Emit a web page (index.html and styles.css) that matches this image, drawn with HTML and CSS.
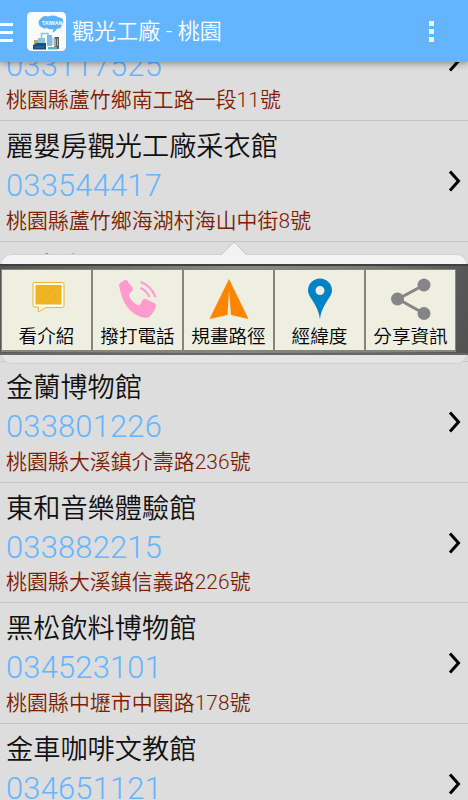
FILE: index.html
```html
<!DOCTYPE html>
<html lang="zh-Hant">
<head>
<meta charset="utf-8">
<title>觀光工廠 - 桃園</title>
<link rel="stylesheet" href="styles.css">
</head>
<body>
<div class="app">
  <header class="bar">
    <div class="menu"><i></i><i></i><i></i></div>
    <svg class="logo" viewBox="0 0 39 39" width="39" height="39">
      <rect width="39" height="39" rx="4.5" fill="#fbfbfb"/>
      <path d="M15 15.500a5 5 0 0 1-1-9 5 4 0 0 1 7-2 8 4 0 0 1 11 1 4 4 0 0 1 3 7 4 4 0 0 1-5 4q-1 3-5 4 2-2 1-3.500-4 1-6-1-3 1-5-.5z" fill="#5db2f4"/>
      <text x="15" y="13" class="logo-text" textLength="20">TAIWAN</text>
      <path d="M14.500 27v-5.500h6.500v4" fill="none" stroke="#87c7d8" stroke-width="1.500"/>
      <path d="M11 26h7v6h-7z" fill="#83cbd0"/>
      <path d="M20 23h5v11h-5z" fill="#87b8d9"/>
      <path d="M25 26h2v7h-2z" fill="#c5dced"/>
      <path d="M7 28h4v4H7z" fill="#b9a76d"/>
      <path d="M6 33l4-2h9v6.500H6z" fill="#164f7d"/>
      <path d="M8 35h9" stroke="#2d81b1"/>
      <path d="M27.500 25H32v12h-4.500z" fill="#5f6261"/>
      <path d="M28.500 27v7M30.500 27v7" stroke="#c4ad5c"/>
      <path d="M21 35h9v2.500h-9z" fill="#54b9bd"/>
    </svg>
    <h1>觀光工廠 - 桃園</h1>
    <div class="more"><i></i><i></i><i></i></div>
  </header>
  <main class="list">
    <section class="row">
      <h2></h2><p class="phone">033117525</p><p class="addr">桃園縣蘆竹鄉南工路一段11號</p>
      <svg class="chev" viewBox="0 0 14 24" width="14" height="24"><path d="M2 2.500l8.500 9.500L2 21.500"/></svg>
    </section>
    <section class="row">
      <h2>麗嬰房觀光工廠采衣館</h2><p class="phone">033544417</p><p class="addr">桃園縣蘆竹鄉海湖村海山中街8號</p>
      <svg class="chev" viewBox="0 0 14 24" width="14" height="24"><path d="M2 2.500l8.500 9.500L2 21.500"/></svg>
    </section>
    <section class="row">
      <h2>巧克力共</h2>
      <div class="popup">
        <svg class="arrow" viewBox="0 0 28 15" width="28" height="15"><path d="M1 14L14 1l13 13v1H1z" fill="#f2f2f2"/><path d="M1 14L14 1l13 13" fill="none" stroke="#c4c4c4"/></svg>
        <nav class="actions">
          <div class="action">
            <svg viewBox="0 0 50 50" width="50" height="50"><path d="M11.500 12.500h29a1.500 1.500 0 0 1 1.500 1.500v22a1.500 1.500 0 0 1-1.500 1.500H24L16 42l.5-5h-4a1.500 1.500 0 0 1-1.500-1.500V13z" fill="#fffdf3" stroke="#edb42c"/><path d="M13.500 15h26v19.500H13.500z" fill="#efb321"/><path d="M14 25l9-8M15 31l14-14M21 33l16-15M30 34l9-9" stroke="#f3bd35" stroke-width=".8"/></svg>
            <span>看介紹</span>
          </div>
          <div class="action">
            <svg viewBox="0 0 50 50" width="50" height="50"><path d="M6 15q0-2 6-5 1-.5 2 .5l5.500 7q1 1.500 0 3l-3 3q-1 1.500 0 3.500 3 5.500 8 8 2 .5 3-1l2-4q1-1.500 3-1l9.500 4.500q1.500 1 1 2.500-2 7-7 11-3 1.500-8 0Q10 41 6 15z" fill="#ff9bcd"/><path d="M27.500 12q10 3 15 15M27.500 18q6 2.500 9 9" fill="none" stroke="#ff9bcd" stroke-width="2"/></svg>
            <span>撥打電話</span>
          </div>
          <div class="action">
            <svg viewBox="0 0 50 50" width="50" height="50"><path d="M25 9l19.500 40L27 45 25 20l-1.500 25L5.500 49z" fill="#ff8500"/></svg>
            <span>規畫路徑</span>
          </div>
          <div class="action">
            <svg viewBox="0 0 50 50" width="50" height="50"><path fill-rule="evenodd" d="M25 8.500a12 12 0 0 1 12 12c0 7-10.500 14-12 29-1.500-15-12-22-12-29a12 12 0 0 1 12-12zm0 7.500a4.500 4.500 0 1 0 0 9 4.500 4.500 0 0 0 0-9z" fill="#0082c4"/></svg>
            <span>經緯度</span>
          </div>
          <div class="action">
            <svg viewBox="0 0 50 50" width="50" height="50"><path d="M38 15L12 29l26 14.500" fill="none" stroke="#858585" stroke-width="3"/><g fill="#858585"><circle cx="38" cy="15" r="6.500"/><circle cx="11.500" cy="29" r="6.500"/><circle cx="38" cy="43.500" r="6.500"/></g></svg>
            <span>分享資訊</span>
          </div>
        </nav>
      </div>
    </section>
    <section class="row">
      <h2>金蘭博物館</h2><p class="phone">033801226</p><p class="addr">桃園縣大溪鎮介壽路236號</p>
      <svg class="chev" viewBox="0 0 14 24" width="14" height="24"><path d="M2 2.500l8.500 9.500L2 21.500"/></svg>
    </section>
    <section class="row">
      <h2>東和音樂體驗館</h2><p class="phone">033882215</p><p class="addr">桃園縣大溪鎮信義路226號</p>
      <svg class="chev" viewBox="0 0 14 24" width="14" height="24"><path d="M2 2.500l8.500 9.500L2 21.500"/></svg>
    </section>
    <section class="row">
      <h2>黑松飲料博物館</h2><p class="phone">034523101</p><p class="addr">桃園縣中壢市中園路178號</p>
      <svg class="chev" viewBox="0 0 14 24" width="14" height="24"><path d="M2 2.500l8.500 9.500L2 21.500"/></svg>
    </section>
    <section class="row">
      <h2>金車咖啡文教館</h2><p class="phone">034651121</p>
      <svg class="chev" viewBox="0 0 14 24" width="14" height="24"><path d="M2 2.500l8.500 9.500L2 21.500"/></svg>
    </section>
  </main>
</div>
</body>
</html>
```
FILE: styles.css
```css
* { box-sizing: border-box; }
body {
  margin: 0;
  background: #ddd;
  font-family: Roboto, "Noto Sans CJK TC", sans-serif;
  font-weight: 350;
}
h1, h2, p { margin: 0; font-weight: 350; white-space: nowrap; }
svg { display: block; flex: none; }
.app { height: 800px; overflow: hidden; display: flex; flex-direction: column; }
.bar {
  position: relative;
  z-index: 5;
  flex: none;
  height: 62px;
  display: flex;
  align-items: center;
  background: #64b5ff;
  box-shadow: 0 1px 7px rgba(0, 0, 0, .42);
}
.menu { width: 13px; display: grid; gap: 5px; margin: 3px 14px 0 0; }
.menu i { height: 3px; background: #fff; }
.logo-text { font: bold 5px "Liberation Sans", sans-serif; fill: #fff; }
.bar h1 { font-size: 22px; line-height: 32px; letter-spacing: .1px; color: #fff; margin: 2px 0 0 6px; flex: 1; }
.more { display: grid; gap: 3px; margin-right: 34px; }
.more i { width: 5px; height: 5px; background: #f8f2e4; }
.list { flex: 1; min-height: 0; }
.list .row:first-child { margin-top: -61.5px; }
.row {
  position: relative;
  height: 120.6px;
  padding-left: 6px;
  border-bottom: 1px solid #c6c6c6;
  display: grid;
  grid-template: 44px 36px 34px / 1fr 20px;
  align-items: center;
}
.row h2 { grid-area: 1 / 1; font-size: 27.2px; line-height: 40px; margin-top: 8px; color: #111; }
.phone { grid-area: 2 / 1; font-size: 30.9px; font-weight: 350; line-height: 36px; letter-spacing: .2px; margin-top: 6px; color: #64b5ff; }
.addr { grid-area: 3 / 1; font-size: 20.85px; line-height: 30px; letter-spacing: .12px; margin-top: 5px; color: #7c2000; }
.chev { grid-area: 1 / 2 / 4 / 3; margin-top: 6px; }
.chev path { fill: none; stroke: #000; stroke-width: 3; }
.popup {
  position: absolute;
  z-index: 2;
  top: 12px;
  left: 0;
  right: 0;
  height: 110px;
  padding: 10px 0 9px;
  border-radius: 12px;
  background: linear-gradient(#f4f4f4, #e4e4e4);
  box-shadow: inset 0 0 0 1px #d0d0d0;
}
.arrow { position: absolute; left: 220px; top: -13px; }
.actions {
  height: 91px;
  padding: 3px 12px 4px 1px;
  border-top: 2px solid #3d4140;
  border-bottom: 2px solid #666;
  background: linear-gradient(100deg, #555 0%, #8a8a87 50%, #777 78%, #505050 100%);
  display: grid;
  grid-template-columns: repeat(5, 1fr);
}
.action {
  border: 1px solid #85857a;
  border-width: 1px 1px 2px;
  background: #eeeee1;
  display: flex;
  flex-direction: column;
  align-items: center;
}
.action span { font-size: 18.6px; line-height: 25px; margin-top: 5px; color: #000; white-space: nowrap; }
```
